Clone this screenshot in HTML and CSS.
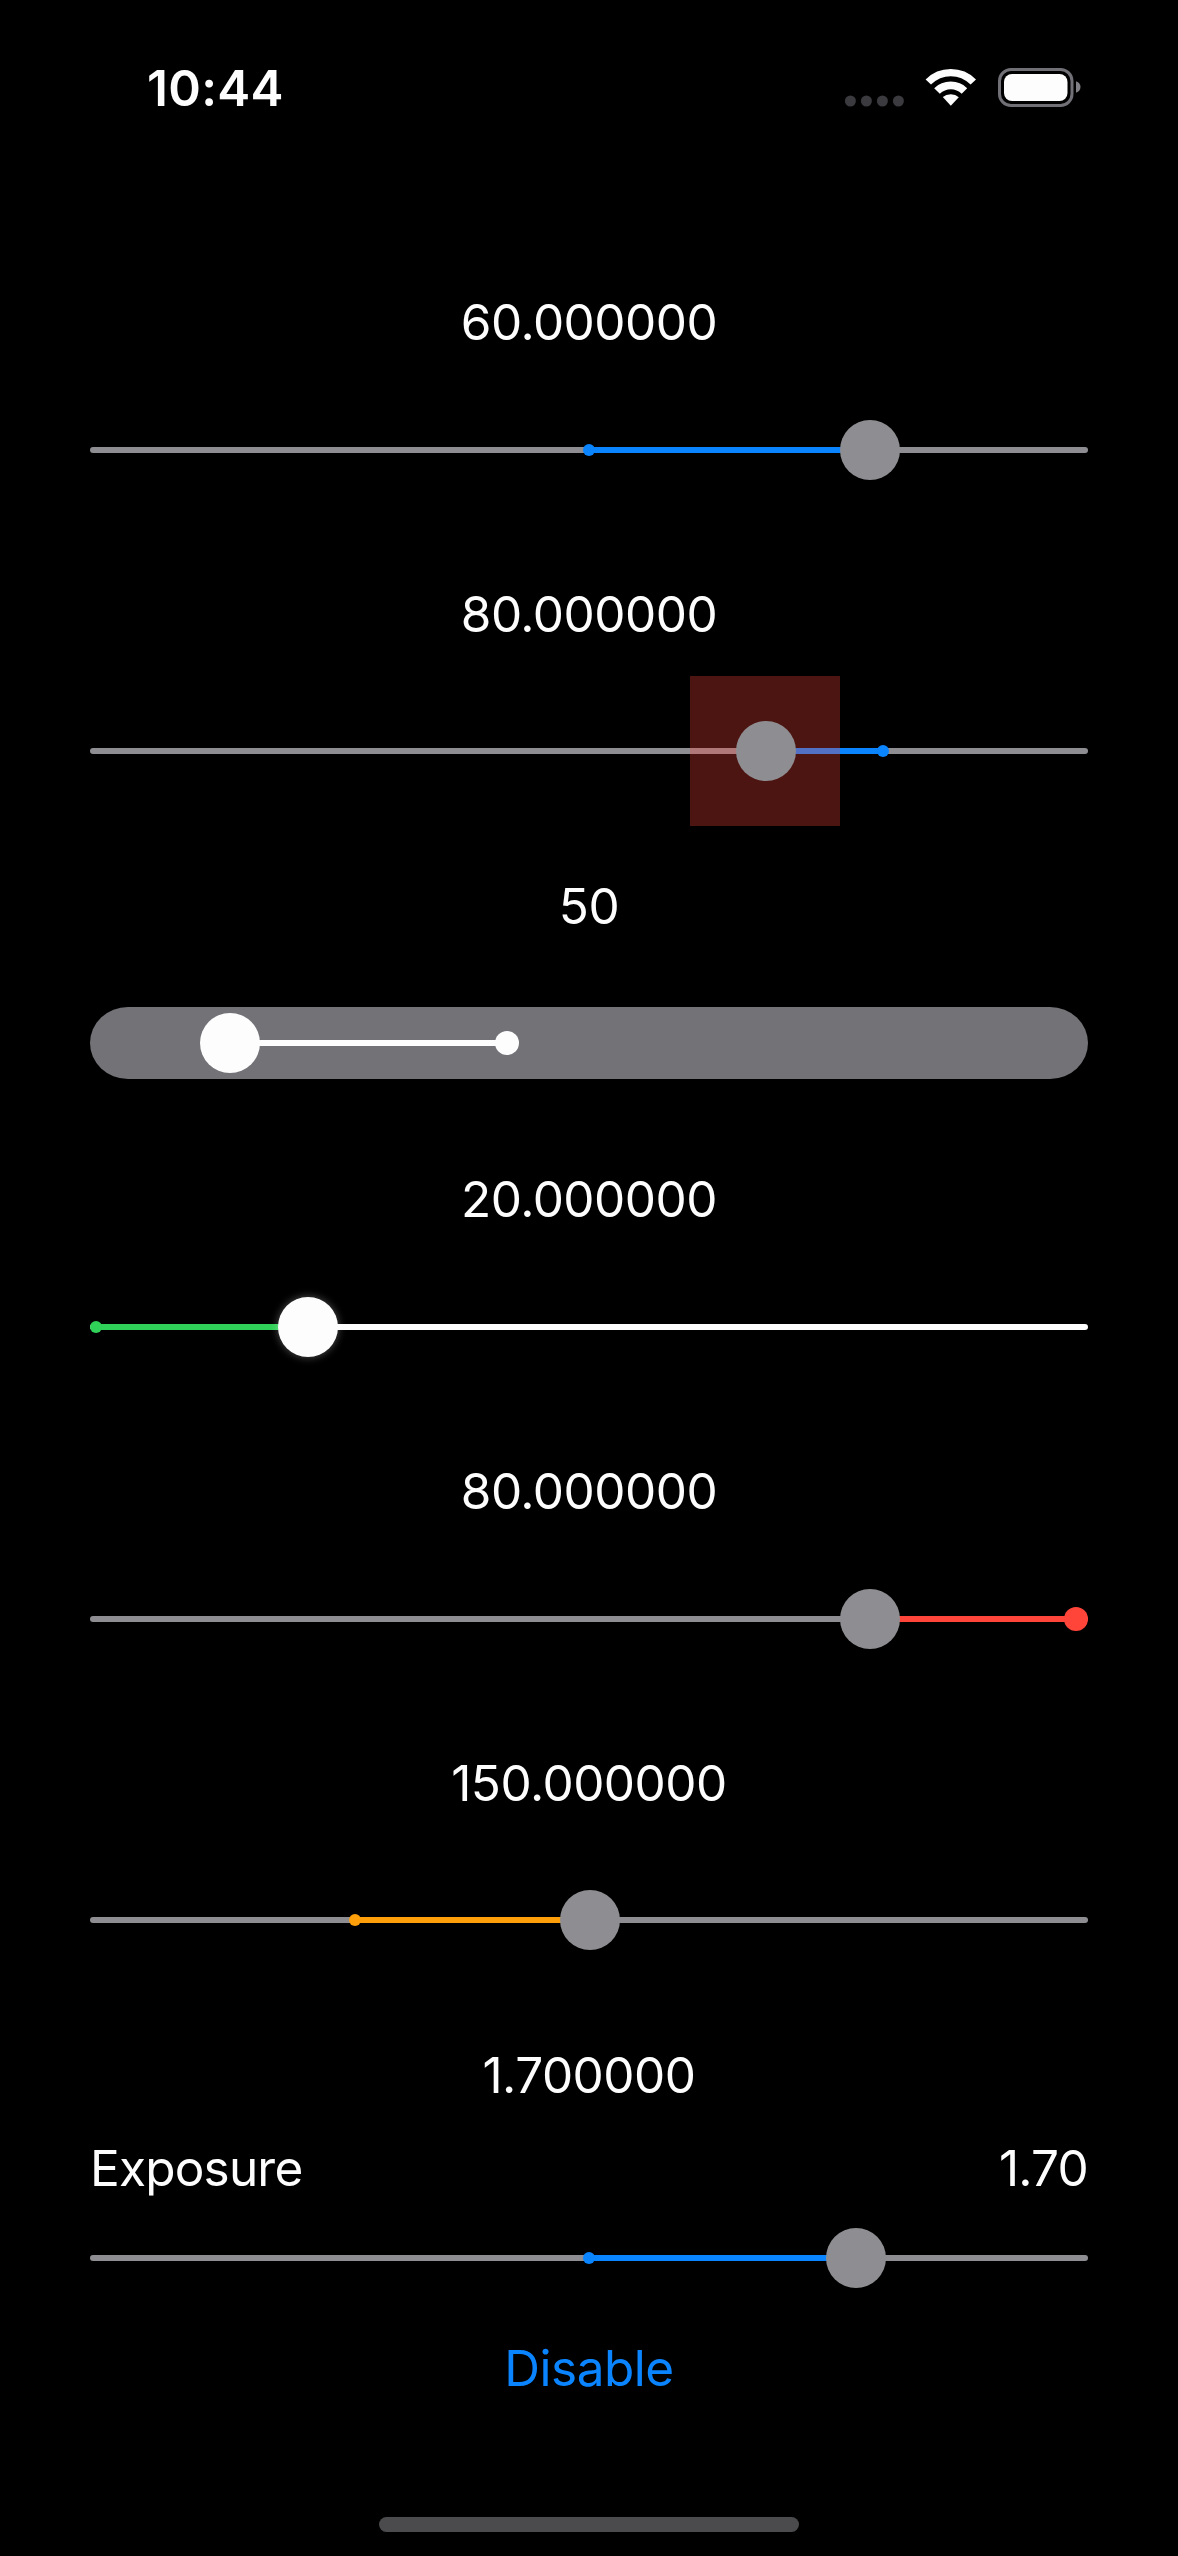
FILE: index.html
```html
<!DOCTYPE html>
<html lang="en">
<head>
<meta charset="utf-8">
<title>Sliders</title>
<link rel="stylesheet" href="styles.css">
</head>
<body>
<div class="screen">
  <header class="status">
    <span class="time">10:44</span>
    <svg class="status-icons" width="240" height="44" viewBox="842 66 240 44" aria-hidden="true">
      <g fill="#3a3a3f">
        <circle cx="850.4" cy="101" r="5.5"/><circle cx="866.4" cy="101" r="5.5"/>
        <circle cx="882.4" cy="101" r="5.5"/><circle cx="898.4" cy="101" r="5.5"/>
      </g>
      <g fill="#fdfdfe">
        <path d="M925.6 79.4Q936 69 950.8 69T976 79.4L970.6 84.6Q962 76.3 950.8 76.3T931 84.6Z"/>
        <path d="M934.2 88.2Q941 81.6 950.8 81.6T967.2 88.2L961.7 93.8Q957 89.2 950.8 89.2T939.8 93.8Z"/>
        <path d="M942.8 97Q946 94.3 950.8 94.3T958.8 97.2L950.8 105.8Z"/>
      </g>
      <rect x="999.5" y="69.5" width="72.5" height="36" rx="11.5" fill="none" stroke="#707076" stroke-width="3"/>
      <rect x="1004" y="74" width="63.5" height="27" rx="8" fill="#fdfdfe"/>
      <path d="M1076 81.3Q1080.5 83 1080.5 87T1076 92.7Z" fill="#808086"/>
    </svg>
  </header>

  <main class="list">
    <section class="item">
      <p class="value">60.000000</p>
      <div class="slider blue">
        <i class="track"></i><i class="fill" style="left:499px;width:281px"></i>
        <i class="dot" style="left:499px"></i><i class="thumb" style="left:780px"></i>
      </div>
    </section>
    <section class="item low">
      <p class="value">80.000000</p>
      <div class="slider blue">
        <i class="track"></i><i class="fill" style="left:675px;width:117px"></i>
        <i class="dot" style="left:792.5px"></i><i class="touch-area" style="left:675px"></i>
        <i class="thumb" style="left:675.5px"></i>
      </div>
    </section>
    <section class="item low">
      <p class="value">50</p>
      <div class="slider capsule large-dot">
        <i class="track"></i><i class="fill" style="left:140px;width:277px"></i>
        <i class="dot" style="left:417px"></i><i class="thumb" style="left:140px"></i>
      </div>
    </section>
    <section class="item mid">
      <p class="value">20.000000</p>
      <div class="slider green glow">
        <i class="track"></i><i class="fill" style="left:6px;width:212px"></i>
        <i class="dot" style="left:6px"></i><i class="thumb" style="left:217.5px"></i>
      </div>
    </section>
    <section class="item mid">
      <p class="value">80.000000</p>
      <div class="slider red large-dot">
        <i class="track"></i><i class="fill" style="left:780px;width:206px"></i>
        <i class="dot" style="left:986px"></i><i class="thumb" style="left:780px"></i>
      </div>
    </section>
    <section class="item lower">
      <p class="value">150.000000</p>
      <div class="slider orange">
        <i class="track"></i><i class="fill" style="left:265px;width:234px"></i>
        <i class="dot" style="left:264.5px"></i><i class="thumb" style="left:499.5px"></i>
      </div>
    </section>
    <section class="item labelled">
      <p class="value">1.700000</p>
      <div class="caption"><span>Exposure</span><span>1.70</span></div>
      <div class="slider blue">
        <i class="track"></i><i class="fill" style="left:499px;width:266px"></i>
        <i class="dot" style="left:499px"></i><i class="thumb" style="left:765.5px"></i>
      </div>
    </section>
    <button class="disable" type="button">Disable</button>
  </main>
  <div class="home"></div>
</div>
</body>
</html>
```
FILE: styles.css
```css
* { box-sizing: border-box; }
body { margin: 0; background: #000; }

.screen {
  display: flex;
  flex-direction: column;
  width: 1178px;
  height: 2556px;
  overflow: hidden;
  background: #000;
  color: #fdfdfe;
  font: 400 49.5px/61px Inter, "Liberation Sans", sans-serif;
}

.status {
  display: flex;
  justify-content: space-between;
  height: 292px;
  padding: 58px 96px 0 147px;
}
.time { font-weight: 600; letter-spacing: 0.3px; }
.status-icons { margin-top: 8px; }

.list {
  display: flex;
  flex-direction: column;
  padding: 0 90px;
}
.item {
  display: flex;
  flex-direction: column;
  height: 292px;
}
.value { height: 61px; margin: 0; text-align: center; letter-spacing: -0.5px; }
.mid .value, .lower .value, .labelled .value { padding-top: 1px; }

.slider {
  --accent: #fdfdfe;
  --base: #8e8e92;
  position: relative;
  display: flex;
  align-items: center;
  height: 60px;
  margin-top: 67px;
}
.mid .slider { margin-top: 68px; }
.low .slider { margin-top: 76px; }
.lower .slider { margin-top: 77px; }

.blue { --accent: #0a84ff; }
.green { --accent: #30d158; --base: #fdfdfe; }
.red { --accent: #ff453a; }
.orange { --accent: #ff9f0a; }

.track {
  width: 100%;
  height: 6px;
  border-radius: 3px;
  background: var(--base);
}
.capsule .track {
  height: 72px;
  flex: none;
  border-radius: 38px / 36px;
  background: #727277;
}

/* Parts that lie over the track, centred on their value */
.fill, .dot, .thumb, .touch-area { position: absolute; top: 50%; }
.fill { height: 6px; margin-top: -3px; background: var(--accent); }
.dot, .thumb, .touch-area { transform: translate(-50%, -50%); }
.dot {
  width: 12px;
  height: 12px;
  border-radius: 50%;
  background: var(--accent);
}
.large-dot .dot { width: 24px; height: 24px; }
.thumb {
  width: 60px;
  height: 60px;
  border-radius: 50%;
  background: #8e8e92;
}
.capsule .thumb, .glow .thumb { background: #fdfdfe; }
.glow .thumb { box-shadow: 0 0 8px rgba(255, 255, 255, 0.33); }
.touch-area {
  width: 150px;
  height: 150px;
  background: rgba(255, 69, 58, 0.3);
}

.labelled { height: 293px; }
.caption {
  display: flex;
  justify-content: space-between;
  margin-top: 33px;
  letter-spacing: -0.8px;
}
.labelled .slider { margin-top: 29px; }

.disable {
  height: 62px;
  padding: 1px 0 0;
  border: 0;
  background: none;
  color: #0a84ff;
  font: inherit;
  letter-spacing: -0.5px;
}

.home {
  width: 420px;
  height: 15px;
  margin: auto auto 24px;
  border-radius: 8px;
  background: #4b4b4e;
}
```
